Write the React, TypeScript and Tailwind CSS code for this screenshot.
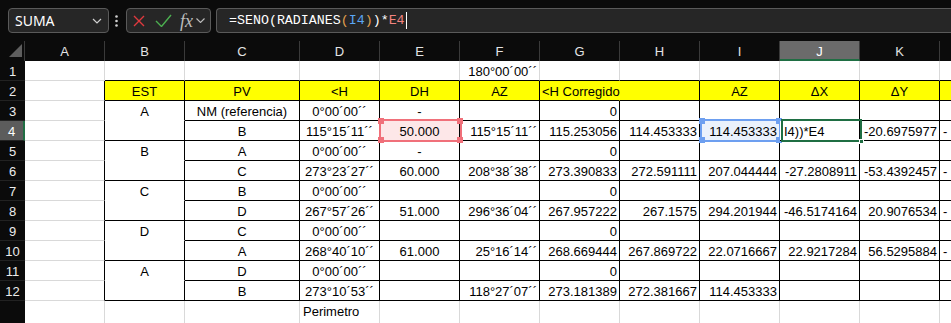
import React from "react"

const COLS = ["A", "B", "C", "D", "E", "F", "G", "H", "I", "J", "K", "L"] as const
type Col = (typeof COLS)[number]

const DATA: Record<number, Partial<Record<Col, string>>> = {
  1: { F: "180°00´00´´" },
  2: { B: "EST", C: "PV", D: "<H", E: "DH", F: "AZ", G: "<H Corregido", I: "AZ", J: "ΔX", K: "ΔY" },
  3: { B: "A", C: "NM (referencia)", D: "0°00´00´´", E: "-", G: "0" },
  4: { C: "B", D: "115°15´11´´", E: "50.000", F: "115°15´11´´", G: "115.253056", H: "114.453333", I: "114.453333", J: "I4))*E4", K: "-20.6975977", L: "-" },
  5: { B: "B", C: "A", D: "0°00´00´´", E: "-", G: "0" },
  6: { C: "C", D: "273°23´27´´", E: "60.000", F: "208°38´38´´", G: "273.390833", H: "272.591111", I: "207.044444", J: "-27.2808911", K: "-53.4392457", L: "-" },
  7: { B: "C", C: "B", D: "0°00´00´´", G: "0" },
  8: { C: "D", D: "267°57´26´´", E: "51.000", F: "296°36´04´´", G: "267.957222", H: "267.1575", I: "294.201944", J: "-46.5174164", K: "20.9076534", L: "-" },
  9: { B: "D", C: "C", D: "0°00´00´´", G: "0" },
  10: { C: "A", D: "268°40´10´´", E: "61.000", F: "25°16´14´´", G: "268.669444", H: "267.869722", I: "22.0716667", J: "22.9217284", K: "56.5295884", L: "-" },
  11: { B: "A", C: "D", D: "0°00´00´´", G: "0" },
  12: { C: "B", D: "273°10´53´´", F: "118°27´07´´", G: "273.181389", H: "272.381667", I: "114.453333" },
  13: { D: "Perimetro" },
}

const ROWS = [1, 2, 3, 4, 5, 6, 7, 8, 9, 10, 11, 12, 13]

function alignOf(r: number, c: Col) {
  if (r === 2) return c === "G" ? "text-left" : "text-center"
  if ((r === 13 && c === "D") || (r === 4 && c === "J") || c === "L") return "text-left"
  if (c === "B" || c === "C" || c === "D" || c === "E") return "text-center"
  return "text-right"
}

function Corner({ pos, color }: { pos: string; color: string }) {
  return <span className={`absolute w-[6px] h-[6px] ${pos} ${color}`} />
}

function Cell({ r, c }: { r: number; c: Col }) {
  const inTable = r >= 2 && r <= 12
  const merged = c === "B" && [3, 5, 7, 9, 11].includes(r)
  const right =
    r === 2 && c === "G"
      ? "border-r-[#ffff00]"
      : inTable && c !== "L"
        ? "border-r-black"
        : "border-r-[#d9d9d9]"
  const bottom =
    r === 13
      ? "border-b-white"
      : merged
        ? "border-b-white"
        : r <= 12 && c !== "A"
          ? "border-b-black"
          : "border-b-[#d9d9d9]"
  const bg =
    r === 2 && c !== "A"
      ? "bg-[#ffff00]"
      : r === 4 && c === "E"
        ? "bg-[#fde7e8]"
        : r === 4 && c === "I"
          ? "bg-[#eaf1fc]"
          : "bg-white"
  const sel = r === 4 && (c === "E" || c === "I" || c === "J")
  const pad =
    r === 4 && c === "J"
      ? "pl-[4px]"
      : c === "L" || (c === "D" && r === 13)
        ? "pl-[3px]"
        : "px-[2px]"

  return (
    <div
      className={`${sel ? "relative" : ""} ${r === 13 ? "h-[30px]" : "h-[20px]"} border-r border-b ${right} ${bottom} ${bg} ${alignOf(r, c)} ${pad} pt-[3px] leading-[16px] whitespace-nowrap text-[13px] text-black`}
    >
      {DATA[r]?.[c] ?? ""}
      {r === 4 && c === "E" && (
        <div className="absolute -left-[1px] -top-[2px] w-[83px] h-[23px] border-2 border-[#f0707a]">
          <Corner pos="-left-[3px] -top-[3px]" color="bg-[#f0707a]" />
          <Corner pos="-right-[3px] -top-[3px]" color="bg-[#f0707a]" />
          <Corner pos="-left-[3px] -bottom-[3px]" color="bg-[#f0707a]" />
          <Corner pos="-right-[3px] -bottom-[3px]" color="bg-[#f0707a]" />
        </div>
      )}
      {r === 4 && c === "I" && (
        <div className="absolute left-0 -top-[2px] w-[81px] h-[23px] border-2 border-[#6d9ff0]">
          <Corner pos="-left-[3px] -top-[3px]" color="bg-[#6d9ff0]" />
          <Corner pos="-right-[3px] -top-[3px]" color="bg-[#6d9ff0]" />
          <Corner pos="-left-[3px] -bottom-[3px]" color="bg-[#6d9ff0]" />
          <Corner pos="-right-[3px] -bottom-[3px]" color="bg-[#6d9ff0]" />
        </div>
      )}
      {r === 4 && c === "J" && (
        <div className="absolute left-[1px] -top-[2px] w-[81px] h-[23px] border-2 border-[#1f6e43]">
          <span className="absolute -right-[4px] -bottom-[4px] w-[5px] h-[5px] bg-[#1f6e43] border border-white" />
        </div>
      )}
    </div>
  )
}

function FormulaBar() {
  return (
    <div className="flex items-center h-[41px] bg-[#0b0b0b] pl-[8px] font-['Noto_Sans',sans-serif]">
      <div className="flex items-center justify-between w-[101px] h-[25px] rounded-[4px] border border-[#5a5a5a] bg-[#262626] pl-[6px] pr-[6px]">
        <span className="text-[14px] text-white leading-none">SUMA</span>
        <svg width="10" height="6" viewBox="0 0 10 6" fill="none">
          <path d="M1 1l4 4 4-4" stroke="#cfcfcf" strokeWidth="1.2" />
        </svg>
      </div>
      <svg className="mx-[6px]" width="3" height="12" viewBox="0 0 3 12">
        <circle cx="1.5" cy="1.5" r="1.3" fill="#d0d0d0" />
        <circle cx="1.5" cy="6" r="1.3" fill="#d0d0d0" />
        <circle cx="1.5" cy="10.5" r="1.3" fill="#d0d0d0" />
      </svg>
      <div className="flex items-center w-[85px] h-[25px] rounded-[4px] border border-[#5a5a5a] bg-[#262626] ml-[2px] pl-[6px]">
        <svg width="12" height="12" viewBox="0 0 12 12" fill="none">
          <path d="M1 1l10 10M11 1L1 11" stroke="#e0393e" strokeWidth="1.4" />
        </svg>
        <svg className="ml-[10px]" width="17" height="13" viewBox="0 0 17 13" fill="none">
          <path d="M1 7l5.5 5.5L16 1" stroke="#4caf50" strokeWidth="1.4" />
        </svg>
        <span className="ml-[8px] text-[18px] italic text-[#bdbdbd] leading-none font-['Liberation_Serif',serif]">fx</span>
        <svg className="ml-[3px]" width="9" height="5" viewBox="0 0 9 5" fill="none">
          <path d="M0.5 0.5l4 4 4-4" stroke="#bdbdbd" strokeWidth="1.1" />
        </svg>
      </div>
      <div className="flex items-center flex-1 h-[25px] ml-[5px] rounded-l-[4px] border border-r-0 border-[#5a5a5a] bg-[#262626] pl-[12px]">
        <span className="text-[13.3px] text-white leading-none whitespace-pre font-['Liberation_Mono',monospace]">
          =SENO(RADIANES<span className="text-[#e0a050]">(</span>
          <span className="text-[#5ba7f5]">I4</span>
          <span className="text-[#e0a050]">)</span>)*<span className="text-[#f2837f]">E4</span>
        </span>
        <span className="w-px h-[17px] bg-white ml-[1px]" />
      </div>
    </div>
  )
}

export default function App() {
  return (
    <div className="w-[951px] h-[323px] overflow-hidden bg-[#0b0b0b] font-['Liberation_Sans',Arial,sans-serif]">
      <FormulaBar />
      <div className="grid grid-cols-[25px_80px_80px_115px_80px_80px_80px_80px_80px_80px_80px_80px_80px]">
        {/* header row */}
        <div className="relative h-[20px] bg-[#0b0b0b] border-r border-[#3a3a3a]">
          <svg className="absolute right-[2px] bottom-[4px]" width="13" height="13" viewBox="0 0 13 13">
            <path d="M13 0V13H0Z" fill="#5e5e5e" />
          </svg>
        </div>
        {COLS.map((c) => (
          <div
            key={c}
            className={`h-[20px] text-center text-[13px] leading-[19px] pt-[1px] border-r border-[#3a3a3a] ${
              c === "J" ? "bg-[#6b6b6b] text-white border-b-2 border-b-[#1f6e43]" : "bg-[#0b0b0b] text-[#e4e4e4]"
            }`}
          >
            {c === "L" ? "" : c}
          </div>
        ))}
        {ROWS.map((r) => (
          <React.Fragment key={r}>
            <div
              className={`${r === 13 ? "h-[30px]" : "h-[20px]"} text-center text-[13px] pt-[3px] leading-[16px] border-b border-[#222] ${
                r === 4 ? "bg-[#5c5c5c] text-white border-r-2 border-r-[#1f6e43]" : "bg-[#0b0b0b] text-[#ececec]"
              }`}
            >
              {r === 13 ? "" : r}
            </div>
            {COLS.map((c) => (
              <Cell key={c} r={r} c={c} />
            ))}
          </React.Fragment>
        ))}
      </div>
    </div>
  )
}
